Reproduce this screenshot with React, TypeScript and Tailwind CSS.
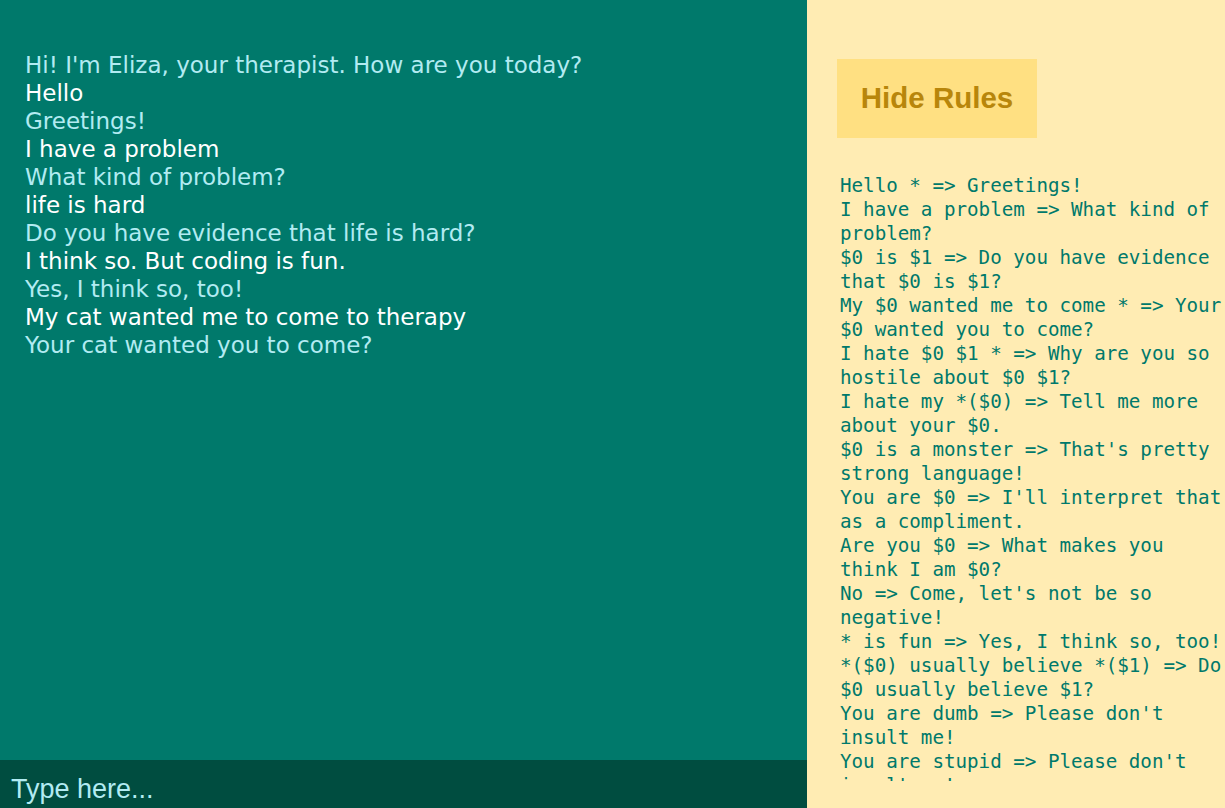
import React from "react";

const messages: { from: "eliza" | "user"; text: string }[] = [
  { from: "eliza", text: "Hi! I'm Eliza, your therapist. How are you today?" },
  { from: "user", text: "Hello" },
  { from: "eliza", text: "Greetings!" },
  { from: "user", text: "I have a problem" },
  { from: "eliza", text: "What kind of problem?" },
  { from: "user", text: "life is hard" },
  { from: "eliza", text: "Do you have evidence that life is hard?" },
  { from: "user", text: "I think so. But coding is fun." },
  { from: "eliza", text: "Yes, I think so, too!" },
  { from: "user", text: "My cat wanted me to come to therapy" },
  { from: "eliza", text: "Your cat wanted you to come?" },
];

const rules = [
  "Hello * => Greetings!",
  "I have a problem => What kind of problem?",
  "$0 is $1 => Do you have evidence that $0 is $1?",
  "My $0 wanted me to come * => Your $0 wanted you to come?",
  "I hate $0 $1 * => Why are you so hostile about $0 $1?",
  "I hate my *($0) => Tell me more about your $0.",
  "$0 is a monster => That's pretty strong language!",
  "You are $0 => I'll interpret that as a compliment.",
  "Are you $0 => What makes you think I am $0?",
  "No => Come, let's not be so negative!",
  "* is fun => Yes, I think so, too!",
  "*($0) usually believe *($1) => Do $0 usually believe $1?",
  "You are dumb => Please don't insult me!",
  "You are stupid => Please don't insult me!",
  "You are an idiot => Please don't insult me!",
];

export default function App() {
  return (
    <div className="flex h-[808px] w-[1225px] overflow-hidden">
      <div className="flex w-[807px] shrink-0 flex-col bg-[#00796b]">
        <div className="flex-1 pl-[25px] pt-[51px] font-['DejaVu_Sans',sans-serif] text-[23px] leading-[28px]">
          {messages.map((m, i) => (
            <div key={i} className={m.from === "eliza" ? "text-[#b2ebf2]" : "text-white"}>
              {m.text}
            </div>
          ))}
        </div>
        <div className="h-[48px] shrink-0 bg-[#004d40] pl-[11px] pt-[16px] font-['Liberation_Sans',sans-serif] text-[27px] leading-[27px] text-[#b2ebf2]">
          Type here...
        </div>
      </div>
      <div className="flex h-[808px] flex-1 flex-col overflow-hidden bg-[#ffecb3] pb-[27px] pl-[30px] pt-[59px]">
        <div className="flex h-[79px] w-[200px] shrink-0 items-center justify-center bg-[#ffe082] font-['Liberation_Sans',sans-serif] text-[29.5px] font-bold text-[#b8860b]">
          Hide Rules
        </div>
        <div className="mt-[36px] min-h-0 w-[385px] flex-1 overflow-hidden pl-[3px] font-['DejaVu_Sans_Mono',monospace] text-[19.2px] leading-[24px] text-[#00796b]">
          {rules.map((r, i) => (
            <div key={i}>{r}</div>
          ))}
        </div>
      </div>
    </div>
  );
}
